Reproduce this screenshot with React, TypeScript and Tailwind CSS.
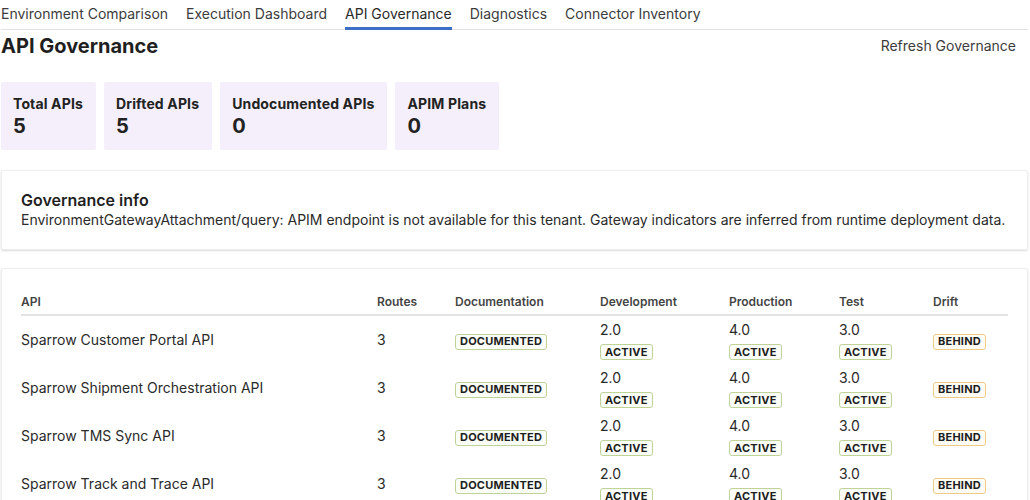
import React from "react";

const tabs = [
  "Environment Comparison",
  "Execution Dashboard",
  "API Governance",
  "Diagnostics",
  "Connector Inventory",
];

const stats = [
  { label: "Total APIs", value: "5" },
  { label: "Drifted APIs", value: "5" },
  { label: "Undocumented APIs", value: "0" },
  { label: "APIM Plans", value: "0" },
];

const rows = [
  "Sparrow Customer Portal API",
  "Sparrow Shipment Orchestration API",
  "Sparrow TMS Sync API",
  "Sparrow Track and Trace API",
  "Sparrow Carrier Rates API",
];

const cols = "grid grid-cols-[356px_78px_145px_129px_110px_94px_75px]";

function Badge({ text, tone, extra = "" }: { text: string; tone: "green" | "orange"; extra?: string }) {
  return (
    <span
      className={
        "inline-flex h-[16px] items-center rounded-[3px] border px-[4px] text-[11px] font-bold leading-none tracking-[0.02em] text-[#1e1e1e] " +
        (tone === "green"
          ? "border-[#bfd398] bg-[#fbfdf7] "
          : "border-[#eccb86] bg-[#fffcf5] ") +
        extra
      }
    >
      {text}
    </span>
  );
}

function Env({ v }: { v: string }) {
  return (
    <div className="flex flex-col items-start">
      <span className="block text-[14px] leading-[20px] text-[#2a2a2a]">{v}</span>
      <Badge text="ACTIVE" tone="green" extra="mt-[4px]" />
    </div>
  );
}

export default function App() {
  return (
    <div
      className="h-[500px] w-[1030px] overflow-hidden bg-white pl-[1px] pr-[2px] text-[#222]"
      style={{ fontFamily: "Inter, 'Noto Sans', sans-serif" }}
    >
      <div className="flex h-[30px] gap-[18px] border-b border-[#e2e2e2]">
        {tabs.map((t) => (
          <div
            key={t}
            className={
              "h-[30px] pt-[4px] text-[14px] leading-[20px] " +
              (t === "API Governance"
                ? "border-b-[3px] border-[#3b6fc6] text-[#2a2a2a]"
                : "text-[#3c3c3c]")
            }
          >
            {t}
          </div>
        ))}
      </div>

      <div className="mt-[2px] flex h-[28px] items-center justify-between">
        <h1 className="text-[20px] font-bold leading-[28px] text-[#1f1f1f]">API Governance</h1>
        <button className="px-3 text-[14px] leading-[20px] text-[#3c3c3c]">Refresh Governance</button>
      </div>

      <div className="mt-[22px] flex gap-[8px]">
        {stats.map((s) => (
          <div key={s.label} className="h-[68px] rounded-[2px] bg-[#f4effa] py-3 pl-3 pr-[13px]">
            <div className="text-[14px] font-bold leading-[20px] tracking-[0.01em] text-[#222]">{s.label}</div>
            <div className="text-[20px] font-bold leading-[24px] text-[#222]">{s.value}</div>
          </div>
        ))}
      </div>

      <div className="mt-[20px] rounded-[2px] border border-[#eeeeee] p-[19px] shadow-[0_1px_2px_rgba(0,0,0,0.15)]">
        <div className="text-[16px] font-semibold leading-[20px] text-[#1f1f1f]">Governance info</div>
        <div className="text-[14px] leading-[20px] text-[#2a2a2a]">
          EnvironmentGatewayAttachment/query: APIM endpoint is not available for this tenant. Gateway indicators are inferred from runtime deployment data.
        </div>
      </div>

      <div className="mt-[18px] rounded-[2px] border border-[#eeeeee] p-[19px] shadow-[0_1px_2px_rgba(0,0,0,0.15)]">
        <div className={cols + " h-[28px] items-start border-b-2 border-[#e4e4e4] pt-[6px] text-[12px] font-semibold leading-[16px] text-[#444]"}>
          <div>API</div>
          <div>Routes</div>
          <div>Documentation</div>
          <div>Development</div>
          <div>Production</div>
          <div>Test</div>
          <div>Drift</div>
        </div>
        {rows.map((r) => (
          <div key={r} className={cols + " h-[48px] items-center text-[14px] leading-[20px] text-[#2a2a2a]"}>
            <div>{r}</div>
            <div>3</div>
            <div>
              <Badge text="DOCUMENTED" tone="green" />
            </div>
            <Env v="2.0" />
            <Env v="4.0" />
            <Env v="3.0" />
            <div>
              <Badge text="BEHIND" tone="orange" />
            </div>
          </div>
        ))}
      </div>
    </div>
  );
}
